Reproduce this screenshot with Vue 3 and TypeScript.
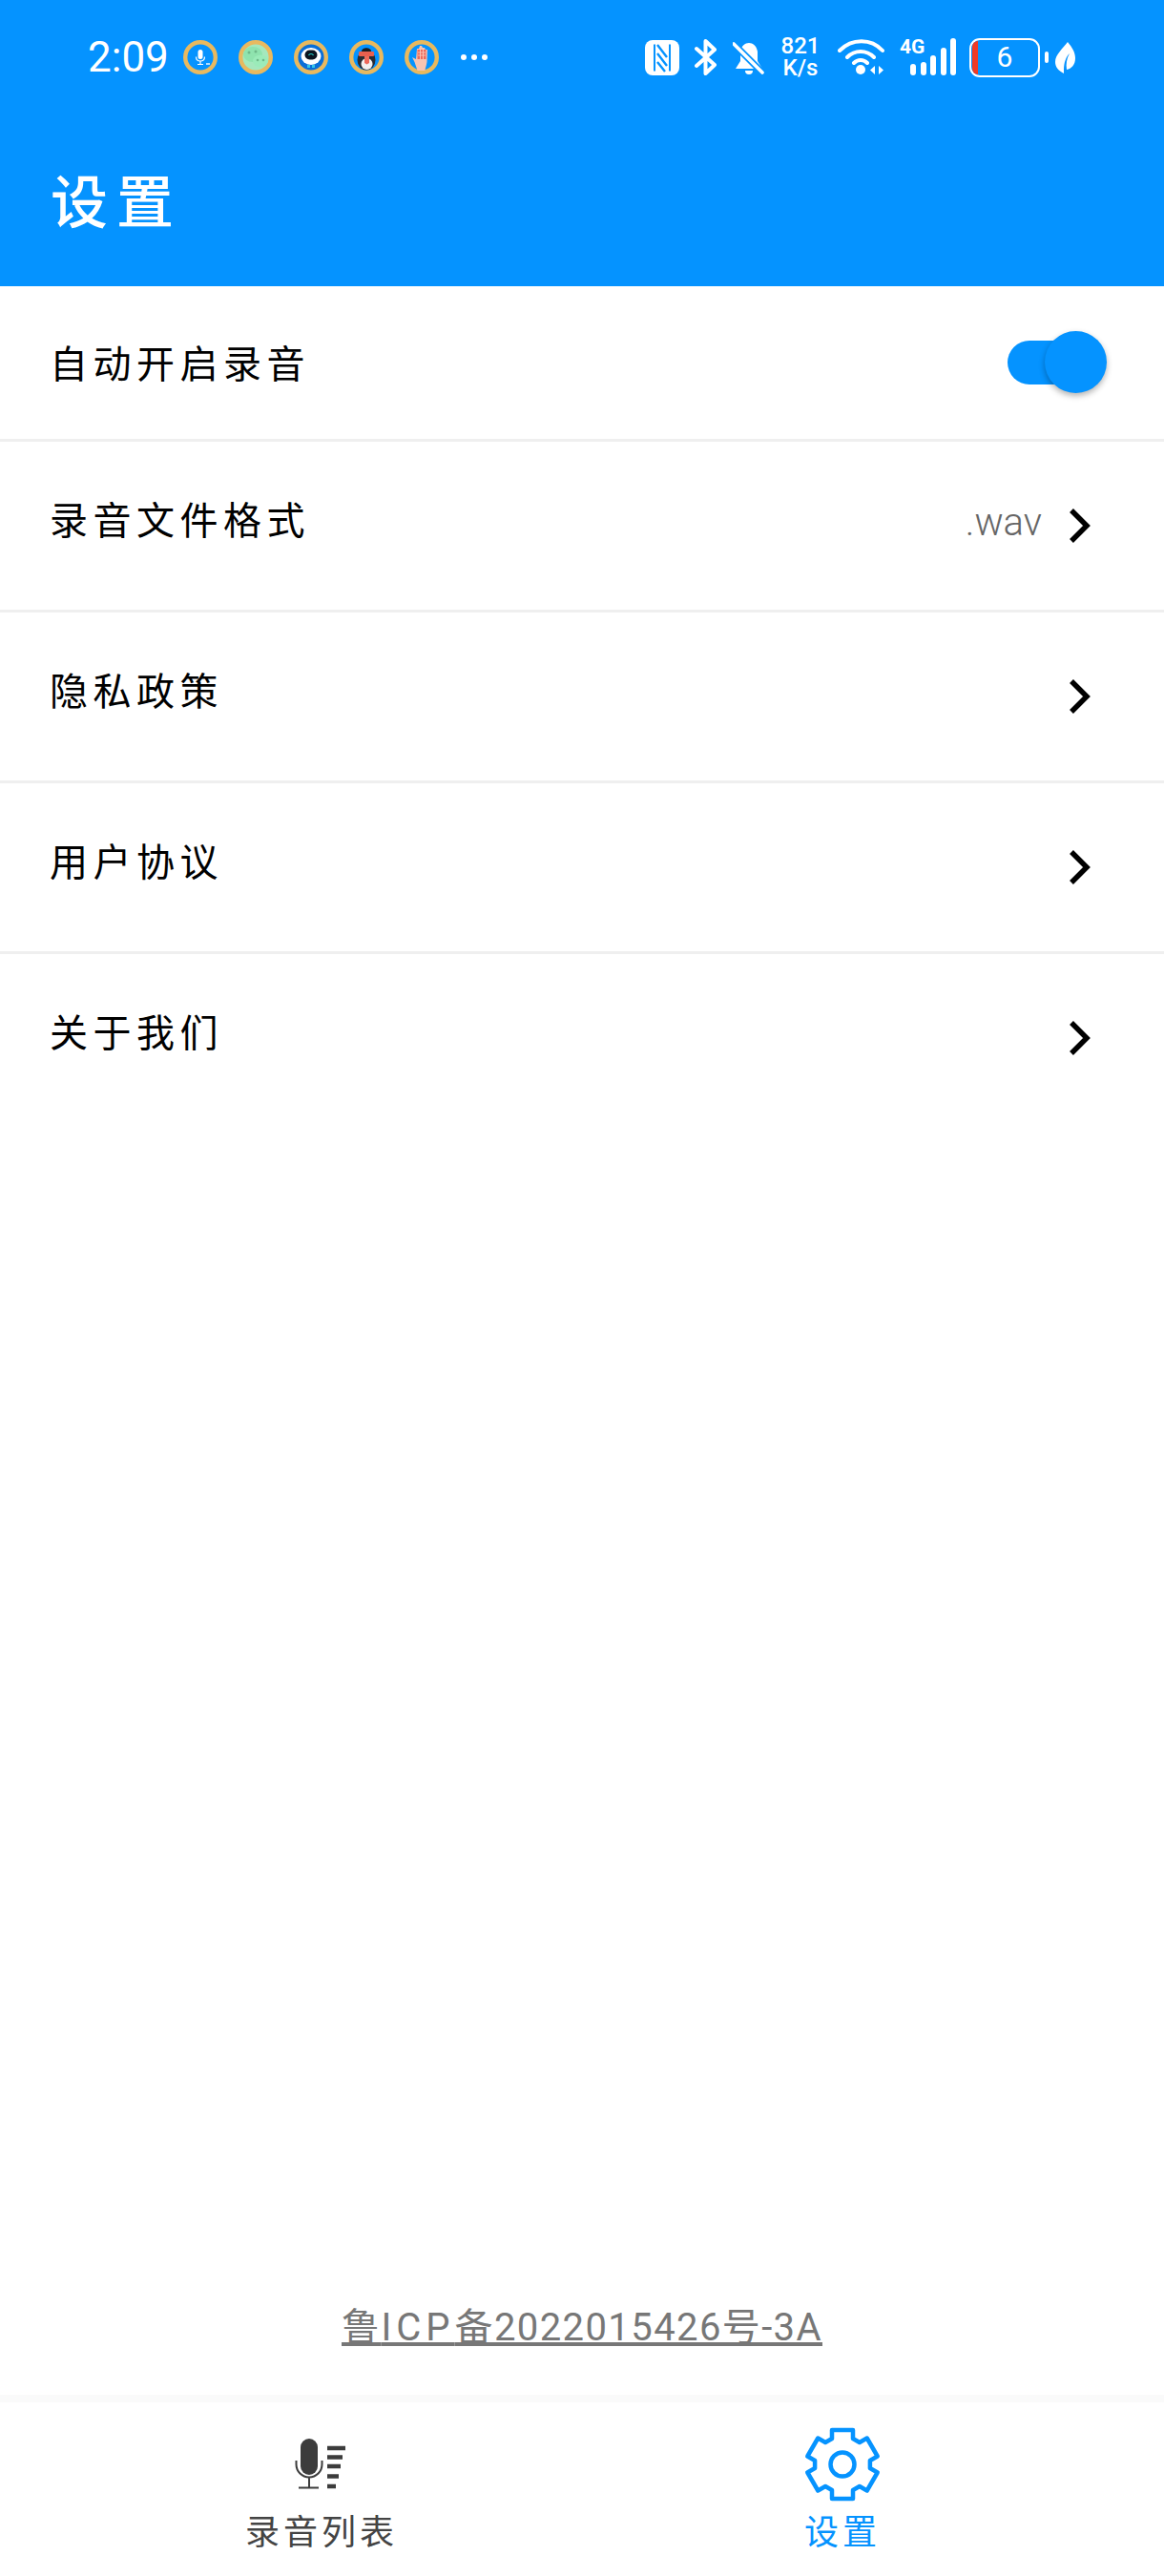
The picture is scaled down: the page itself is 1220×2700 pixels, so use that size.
<script setup lang="ts">
import { computed, ref } from 'vue'

interface SettingRow {
  label: string
  value?: string
}

const autoRecord = ref(true)
const rows: SettingRow[] = [
  { label: '录音文件格式', value: '.wav' },
  { label: '隐私政策' },
  { label: '用户协议' },
  { label: '关于我们' }
]

// six teeth around the centre, outline of the settings icon
const gearPath = computed(() => {
  const tooth: [number, number][] = [[27, -11], [36, -11], [36, 11], [27, 11]]
  const points: string[] = []
  for (let i = 0; i < 6; i++) {
    const angle = (i * Math.PI) / 3
    tooth.forEach(([r, side]) => {
      const x = 40 + r * Math.sin(angle) + side * Math.cos(angle)
      const y = 40 - r * Math.cos(angle) + side * Math.sin(angle)
      points.push(`${x.toFixed(1)} ${y.toFixed(1)}`)
    })
  }
  return `M${points.join('L')}Z`
})
</script>

<template>
  <div class="page">
    <header class="header">
      <div class="status">
        <span class="time">2:09</span>
        <div class="apps">
          <svg class="app" viewBox="0 0 36 36">
            <circle cx="18" cy="18" r="15.800" fill="#0593ff" stroke="#e8b95f" stroke-width="4.400" />
            <rect x="15.500" y="10" width="5" height="10" rx="2.500" fill="#fff" />
            <path d="M13.500 17.500c0 6 9 6 9 0M18 22v3M15 25.500h6" fill="none" stroke="#fff" stroke-width="1.200" />
            <path d="M24 25h4" stroke="#fff" stroke-width="1.400" />
          </svg>
          <svg class="app" viewBox="0 0 36 36">
            <circle cx="18" cy="18" r="15.800" fill="#a5e8bd" stroke="#e8b95f" stroke-width="4.400" />
            <ellipse cx="15" cy="15" rx="10" ry="8" fill="#8fe3ae" />
            <ellipse cx="23" cy="22" rx="8" ry="6.500" fill="#9bebb9" />
            <circle cx="11" cy="13" r="1.500" fill="#6fb98a" />
            <circle cx="18" cy="12" r="1.500" fill="#6fb98a" />
            <circle cx="20" cy="21" r="1.300" fill="#6fb98a" />
            <circle cx="26" cy="21" r="1.300" fill="#6fb98a" />
          </svg>
          <svg class="app" viewBox="0 0 36 36">
            <circle cx="18" cy="18" r="15.800" fill="#0a6fd8" stroke="#e8b95f" stroke-width="4.400" />
            <ellipse cx="18" cy="17" rx="10.500" ry="9" fill="#fff" />
            <rect x="11.500" y="10.500" width="13" height="10" rx="5" fill="#0a1420" />
            <path d="M15.500 16c1-2 4-2 5 0" fill="none" stroke="#28d0c8" stroke-width="1.200" />
            <path d="M14 26h3v3h-3zM19 26h3v3h-3z" fill="#33c7e8" />
          </svg>
          <svg class="app" viewBox="0 0 36 36">
            <circle cx="18" cy="18" r="15.800" fill="#0593ff" stroke="#e8b95f" stroke-width="4.400" />
            <ellipse cx="18" cy="21" rx="9.500" ry="10.500" fill="#2b2d33" />
            <ellipse cx="18.500" cy="25" rx="6" ry="6" fill="#f4f1ee" />
            <rect x="10" y="12" width="16" height="5" rx="1" fill="#e9604f" />
            <path d="M16 17h5v7l-2.500 1.500-2.500-1.500z" fill="#ef6a5a" />
            <path d="M13 12c0-5 10-5 10 0z" fill="#1d1d1f" />
          </svg>
          <svg class="app" viewBox="0 0 36 36">
            <circle cx="18" cy="18" r="15.800" fill="#0593ff" stroke="#e8b95f" stroke-width="4.400" />
            <path d="M8 18l4 2 1-11h2l1-3h2l1 2h2l1 2h2l-.5 13c-.5 4-2 7-2 9h-8l-3-9z" fill="#f7c4b2" />
            <path d="M13.500 10h9v10h-9z" fill="#ee6a5c" />
            <path d="M14 13h8M14 16h8M16.500 9v11M19.500 9v11" stroke="#f9c9bb" stroke-width=".9" />
          </svg>
          <span class="more"><i></i><i></i><i></i></span>
        </div>
        <div class="indicators">
          <svg class="nfc" viewBox="0 0 36 37">
            <rect width="36" height="37" rx="8" fill="#fff" />
            <path d="M10 4.500v28M26 4.500v28" stroke="#0593ff" stroke-width="2" />
            <path d="M13 5l10 13M13 14l10 13M13 23l8 10" stroke="#0593ff" stroke-width="2.400" fill="none" />
          </svg>
          <svg class="bluetooth" viewBox="0 0 24 38">
            <path d="M2 10l19 17-9.500 9V2l9.500 9L2 28" fill="none" stroke="#fff" stroke-width="4" stroke-linejoin="round" stroke-linecap="round" />
          </svg>
          <svg class="bell" viewBox="0 0 34 38">
            <path d="M3 31h28L26 23V13C25 7 21 4 17 4S9 7 8 13v10z" fill="#fff" />
            <path d="M13 33h8a4 4 0 0 1-8 0z" fill="#fff" />
            <path d="M-1 3l32 32" stroke="#0593ff" stroke-width="7" />
            <path d="M1 5l30 30" stroke="#fff" stroke-width="3.600" stroke-linecap="round" />
          </svg>
          <span class="speed"><b>821</b><b>K/s</b></span>
          <svg class="wifi" viewBox="0 0 50 40">
            <path d="M2 13c13-13 33-13 45 0M10 20c8-8 20-8 28 0M17 26c4-4 10-4 14 0" fill="none" stroke="#fff" stroke-width="4" stroke-linecap="round" />
            <circle cx="24" cy="33" r="5" fill="#fff" />
            <path d="M39 29v9l-5-4.500zM43 29v9l5-4.500z" fill="#fff" />
          </svg>
          <div class="signal">
            <span class="net">4G</span>
            <svg viewBox="0 0 50 40">
              <rect x="2" y="27" width="6" height="12" rx="3" fill="#fff" />
              <rect x="13" y="25" width="6" height="14" rx="3" fill="#fff" />
              <rect x="23" y="18" width="6" height="21" rx="3" fill="#fff" />
              <rect x="34" y="10" width="6" height="29" rx="3" fill="#fff" />
              <rect x="44" y="0" width="6" height="39" rx="3" fill="#fff" />
            </svg>
          </div>
          <div class="battery">
            <span class="battery-level"></span>
            <span class="battery-text">6</span>
          </div>
          <span class="battery-nub"></span>
          <svg class="leaf" viewBox="0 0 21 33">
            <path d="M13 0c5 6 8 11 8 17 0 7-4 11-9 12-1-6 0-12 3-17-4 4-6 10-6 17v4C3 30 0 26 0 21 0 13 8 7 13 0z" fill="#fff" />
          </svg>
        </div>
      </div>
      <h1 class="title">设置</h1>
    </header>

    <main class="list">
      <div class="row row-first">
        <span class="label">自动开启录音</span>
        <button class="switch" :class="{ on: autoRecord }" @click="autoRecord = !autoRecord">
          <span class="knob"></span>
        </button>
      </div>
      <div v-for="row in rows" :key="row.label" class="row">
        <span class="label">{{ row.label }}</span>
        <span v-if="row.value" class="value">{{ row.value }}</span>
        <svg class="chevron" viewBox="0 0 24 38">
          <path d="M3 3l16 16L3 35" fill="none" stroke="#000" stroke-width="5.500" />
        </svg>
      </div>
    </main>

    <a class="icp">鲁<span class="icp-latin">ICP</span>备2022015426号-3A</a>

    <nav class="tabs">
      <div class="tab">
        <svg class="tab-mic" viewBox="0 0 60 60">
          <rect x="10" y="2" width="18" height="38" rx="9" fill="#3c3c3c" />
          <path d="M5.500 25v4a13.500 13.500 0 0 0 27 0v-4M19 43v10M8 53.500h21" fill="none" stroke="#3c3c3c" stroke-width="2" />
          <path d="M38 12h19M38 21.500h16M38 31h14M38 41.500h12M38 52h9" stroke="#3c3c3c" stroke-width="4.500" />
        </svg>
        <span class="tab-label">录音列表</span>
      </div>
      <div class="tab tab-active">
        <svg class="tab-gear" viewBox="0 0 80 80">
          <path :d="gearPath" fill="none" stroke="#0593ff" stroke-width="4.500" stroke-linejoin="round" />
          <circle cx="40" cy="40" r="12.500" fill="none" stroke="#0593ff" stroke-width="4.500" />
        </svg>
        <span class="tab-label">设置</span>
      </div>
    </nav>
  </div>
</template>

<style>
html,
body {
  background: #fff;
}
</style>

<style scoped>
.page {
  display: flex;
  flex-direction: column;
  width: 1220px;
  height: 2700px;
  background: #fff;
  font-family: 'Noto Sans CJK SC', 'Noto Sans', sans-serif;
}
.header {
  height: 300px;
  background: #0593ff;
  color: #fff;
}
.status {
  display: flex;
  align-items: center;
  height: 120px;
  padding: 0 93px 0 92px;
  font-family: Roboto, sans-serif;
}
.time {
  width: 100px;
  font-size: 44px;
}
.apps {
  display: flex;
  align-items: center;
  gap: 22px;
}
.app {
  width: 36px;
  height: 36px;
}
.more {
  display: flex;
  gap: 5px;
  margin-left: 1px;
}
.more i {
  width: 6px;
  height: 6px;
  border-radius: 50%;
  background: #fff;
}
.indicators {
  display: flex;
  align-items: center;
  margin-left: auto;
}
.nfc {
  width: 36px;
  height: 37px;
}
.bluetooth {
  width: 24px;
  height: 38px;
  margin-left: 16px;
}
.bell {
  width: 34px;
  height: 38px;
  margin-left: 16px;
}
.speed {
  display: flex;
  flex-direction: column;
  align-items: center;
  width: 44px;
  margin-left: 15px;
  font-size: 24px;
  line-height: 23px;
}
.speed b {
  font-weight: 500;
}
.wifi {
  width: 50px;
  height: 40px;
  margin-left: 17px;
}
.signal {
  position: relative;
  width: 50px;
  height: 40px;
  margin-left: 24px;
}
.signal svg {
  width: 50px;
  height: 40px;
}
.net {
  position: absolute;
  left: -9px;
  top: -3px;
  font-size: 21px;
  font-weight: 700;
  line-height: 24px;
}
.battery {
  display: flex;
  align-items: center;
  justify-content: center;
  position: relative;
  box-sizing: border-box;
  width: 74px;
  height: 41px;
  margin-left: 14px;
  border: 2.5px solid #fff;
  border-radius: 11px;
}
.battery-level {
  position: absolute;
  left: 1px;
  top: 1px;
  bottom: 1px;
  width: 6px;
  border-radius: 6px 0 0 6px;
  background: #f03a25;
}
.battery-text {
  font-size: 30px;
  line-height: 1;
}
.battery-nub {
  width: 4px;
  height: 12px;
  margin-left: 5px;
  border-radius: 2px;
  background: #fff;
}
.leaf {
  width: 21px;
  height: 33px;
  margin-left: 7px;
}
.title {
  margin: 0;
  padding: 46px 0 0 53px;
  font-size: 60px;
  font-weight: 500;
  line-height: 84px;
  letter-spacing: 9px;
}
.list {
  flex: 1;
}
.row {
  display: flex;
  align-items: center;
  height: 176px;
  padding: 0 76px 0 52px;
  border-bottom: 3px solid #efefef;
}
.row:last-child {
  border-bottom: none;
}
.row-first {
  height: 160px;
  padding-right: 60px;
}
.label {
  flex: 1;
  padding-bottom: 17px;
  font-size: 40px;
  line-height: 56px;
  letter-spacing: 5.500px;
  color: #000;
}
.row-first .label {
  padding-bottom: 2px;
}
.value {
  margin-right: 28px;
  padding-bottom: 8px;
  font-family: Roboto, sans-serif;
  font-size: 40px;
  font-weight: 300;
  color: #666;
}
.chevron {
  width: 24px;
  height: 38px;
}
.switch {
  position: relative;
  width: 104px;
  height: 46px;
  padding: 0;
  border: none;
  background: none;
}
.switch.on::before {
  content: '';
  position: absolute;
  left: 0;
  top: 0;
  width: 74px;
  height: 46px;
  border-radius: 23px;
  background: #0593ff;
}
.knob {
  position: absolute;
  right: 0;
  top: -10px;
  width: 65px;
  height: 65px;
  border-radius: 50%;
  background: #0593ff;
  box-shadow: 0 3px 6px rgba(0, 0, 0, 0.3);
}
.icp {
  align-self: center;
  margin-bottom: 46px;
  font-family: Roboto, 'Noto Sans CJK SC', sans-serif;
  font-size: 40px;
  line-height: 48px;
  letter-spacing: 1.400px;
  color: #777;
  text-decoration: underline;
}
.icp-latin {
  letter-spacing: 5px;
}
.tabs {
  display: grid;
  grid-template-columns: 1fr 1fr;
  box-sizing: border-box;
  height: 190px;
  padding: 0 64px;
  background: #fff;
  border-top: 8px solid #fafafa;
}
.tab {
  display: flex;
  flex-direction: column;
  align-items: center;
  color: #444;
}
.tab-mic {
  width: 60px;
  height: 60px;
  margin-top: 36px;
  margin-left: -4px;
}
.tab-gear {
  width: 80px;
  height: 80px;
  margin-top: 25px;
}
.tab-label {
  margin-top: 11px;
  font-size: 36px;
  line-height: 52px;
  letter-spacing: 4px;
}
.tab-active {
  color: #0593ff;
}
.tab-active .tab-label {
  margin-top: 2px;
}
</style>
